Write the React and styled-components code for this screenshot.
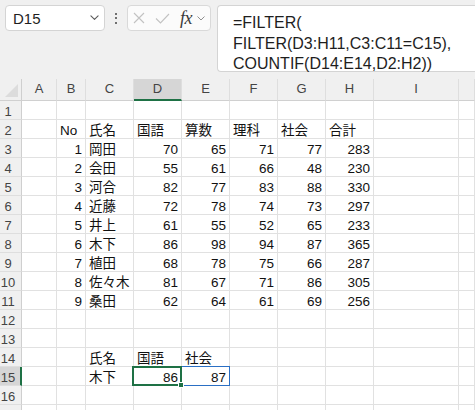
import React from 'react';
import styled, { createGlobalStyle } from 'styled-components';

const Global = createGlobalStyle`
  html, body { margin: 0; padding: 0; background: #fff; }
  body {
    width: 475px; height: 410px; overflow: hidden;
    font-family: "Liberation Sans", "Noto Sans CJK JP", sans-serif;
  }
`;

const Page = styled.div`
  width: 475px;
  height: 410px;
  overflow: hidden;
  background: #f0f0f0;
  display: flex;
  flex-direction: column;
`;

const Bar = styled.div`
  height: 79px;
  flex: none;
  box-sizing: border-box;
  padding: 5px 0 0 5px;
  display: flex;
  align-items: flex-start;
  overflow: hidden;
`;

const NameBox = styled.div`
  flex: none;
  width: 100px;
  height: 26px;
  box-sizing: border-box;
  background: #fff;
  border: 1px solid #d4d4d4;
  border-radius: 4px;
  display: flex;
  align-items: center;
  justify-content: space-between;
  padding: 0 5px 0 7px;
  font-size: 15px;
  color: #1e1e1e;
`;

const Kebab = styled.div`
  flex: none;
  width: 22px;
  height: 26px;
  display: flex;
  flex-direction: column;
  align-items: center;
  justify-content: center;
  gap: 2.5px;
  & > span {
    width: 2px;
    height: 2px;
    background: #444;
    border-radius: 1px;
  }
`;

const FnBox = styled.div`
  flex: none;
  width: 84px;
  height: 26px;
  box-sizing: border-box;
  background: #fbfbfb;
  border: 1px solid #d9d9d9;
  border-radius: 4px;
  display: flex;
  align-items: center;
  padding: 0 0 0 5px;
  gap: 10px;
`;

const Fx = styled.span`
  font-family: "Liberation Serif", serif;
  font-style: italic;
  font-size: 18px;
  color: #3a3a3a;
  margin-right: -5px;
  letter-spacing: -0.5px;
  line-height: 20px;
`;

const FormulaBox = styled.div`
  flex: none;
  margin-left: 6px;
  width: 280px;
  height: 67px;
  box-sizing: border-box;
  background: #fff;
  border: 1px solid #d4d4d4;
  border-right: none;
  border-radius: 4px 0 0 4px;
  padding: 7px 0 0 15px;
  font-size: 16px;
  line-height: 20.7px;
  color: #1e1e1e;
  white-space: pre;
`;

const Sheet = styled.div`
  display: grid;
  grid-template-columns: 22px 35px 29px 48px 48px 48px 48px 48px 48px 85px 1fr;
  grid-template-rows: 22px repeat(17, 19px);
  background: #fff;
`;

const Corner = styled.div`
  position: relative;
  background: #f0f0f0;
  border-right: 1px solid #cfcfcf;
  border-bottom: 1px solid #d0d0d0;
  box-sizing: border-box;
  &::after {
    content: "";
    position: absolute;
    right: 3px;
    bottom: 3px;
    width: 0;
    height: 0;
    border-left: 13px solid transparent;
    border-bottom: 13px solid #dcdcdc;
  }
`;

const ColHead = styled.div`
  box-sizing: border-box;
  background: ${p => (p.$active ? '#d6d6d6' : '#f0f0f0')};
  border-right: 1px solid #dedede;
  border-bottom: ${p => (p.$active ? '2px solid #1e7145' : '1px solid #d0d0d0')};
  font-size: 13px;
  color: #444;
  text-align: center;
  line-height: 18px;
  padding-top: 1px;
`;

const RowHead = styled.div`
  box-sizing: border-box;
  background: ${p => (p.$active ? '#d6d6d6' : '#f0f0f0')};
  border-right: ${p => (p.$active ? '2px solid #1e7145' : '1px solid #cfcfcf')};
  border-bottom: 1px solid #dedede;
  font-size: 13px;
  color: #444;
  text-align: center;
  padding-right: ${p => (p.$active ? '4px' : '5px')};
  line-height: 17px;
  padding-top: 2px;
`;

const Cell = styled.div`
  position: relative;
  box-sizing: border-box;
  border-right: 1px solid #e1e1e1;
  border-bottom: 1px solid #e1e1e1;
  font-size: 13.5px;
  color: #111;
  line-height: 17px;
  padding: 2px 3px 0 3px;
  text-align: ${p => (p.$num ? 'right' : 'left')};
  white-space: nowrap;
  ${p =>
    p.$selected &&
    `
    z-index: 2;
    &::after {
      content: "";
      position: absolute;
      left: -2px; top: -1px; right: -1px; bottom: -1px;
      border: 2px solid #1e7145;
      pointer-events: none;
    }
    &::before {
      content: "";
      position: absolute;
      right: -3px; bottom: -3px;
      width: 6px; height: 6px;
      background: #1e7145;
      border: 1px solid #fff;
      box-sizing: border-box;
      z-index: 3;
    }
  `}
  ${p =>
    p.$spill &&
    `
    z-index: 1;
    &::after {
      content: "";
      position: absolute;
      left: -1px; top: -1px; right: -1px; bottom: -1px;
      border: 1px solid #2a6fc4;
      pointer-events: none;
    }
  `}
`;

const Chevron = ({ size = 9, color = '#5a5a5a' }) => (
  <svg width={size} height={size * 0.6} viewBox="0 0 10 6" fill="none">
    <path d="M1 1 L5 5 L9 1" stroke={color} strokeWidth="1.2" strokeLinecap="round" strokeLinejoin="round" />
  </svg>
);

const Cross = () => (
  <svg width="12" height="12" viewBox="0 0 12 12" fill="none">
    <path d="M1 1 L11 11 M11 1 L1 11" stroke="#c2c2c2" strokeWidth="1.1" />
  </svg>
);

const Check = () => (
  <svg width="15" height="11" viewBox="0 0 15 11" fill="none">
    <path d="M1 5.5 L5.5 10 L14 1" stroke="#c2c2c2" strokeWidth="1.1" />
  </svg>
);

const cols = ['A', 'B', 'C', 'D', 'E', 'F', 'G', 'H', 'I', ''];

const data = [
  [1, '岡田', 70, 65, 71, 77, 283],
  [2, '会田', 55, 61, 66, 48, 230],
  [3, '河合', 82, 77, 83, 88, 330],
  [4, '近藤', 72, 78, 74, 73, 297],
  [5, '井上', 61, 55, 52, 65, 233],
  [6, '木下', 86, 98, 94, 87, 365],
  [7, '植田', 68, 78, 75, 66, 287],
  [8, '佐々木', 81, 67, 71, 86, 305],
  [9, '桑田', 62, 64, 61, 69, 256],
];

function buildRows() {
  const rows = {};
  rows[2] = { B: ['No'], C: ['氏名'], D: ['国語'], E: ['算数'], F: ['理科'], G: ['社会'], H: ['合計'] };
  data.forEach((r, i) => {
    rows[3 + i] = {
      B: [r[0], 'num'],
      C: [r[1]],
      D: [r[2], 'num'],
      E: [r[3], 'num'],
      F: [r[4], 'num'],
      G: [r[5], 'num'],
      H: [r[6], 'num'],
    };
  });
  rows[14] = { C: ['氏名'], D: ['国語'], E: ['社会'] };
  rows[15] = { C: ['木下'], D: [86, 'num', 'sel'], E: [87, 'num', 'spill'] };
  return rows;
}

export default function App() {
  const rows = buildRows();
  const rowNums = Array.from({ length: 17 }, (_, i) => i + 1);
  return (
    <Page>
      <Global />
      <Bar>
        <NameBox>
          <span>D15</span>
          <Chevron />
        </NameBox>
        <Kebab>
          <span />
          <span />
          <span />
        </Kebab>
        <FnBox>
          <Cross />
          <Check />
          <Fx>fx</Fx>
          <Chevron size={8} color="#8a8a8a" />
        </FnBox>
        <FormulaBox>{'=FILTER(\nFILTER(D3:H11,C3:C11=C15),\nCOUNTIF(D14:E14,D2:H2))'}</FormulaBox>
      </Bar>
      <Sheet>
        <Corner />
        {cols.map((c, i) => (
          <ColHead key={i} $active={c === 'D'}>
            {c}
          </ColHead>
        ))}
        {rowNums.map(n => (
          <React.Fragment key={n}>
            <RowHead $active={n === 15}>{n < 17 ? n : ''}</RowHead>
            {cols.map((c, i) => {
              const v = rows[n] && rows[n][c];
              return (
                <Cell
                  key={i}
                  $num={v && v[1] === 'num'}
                  $selected={v && v[2] === 'sel'}
                  $spill={v && v[2] === 'spill'}
                >
                  {v ? v[0] : ''}
                </Cell>
              );
            })}
          </React.Fragment>
        ))}
      </Sheet>
    </Page>
  );
}
